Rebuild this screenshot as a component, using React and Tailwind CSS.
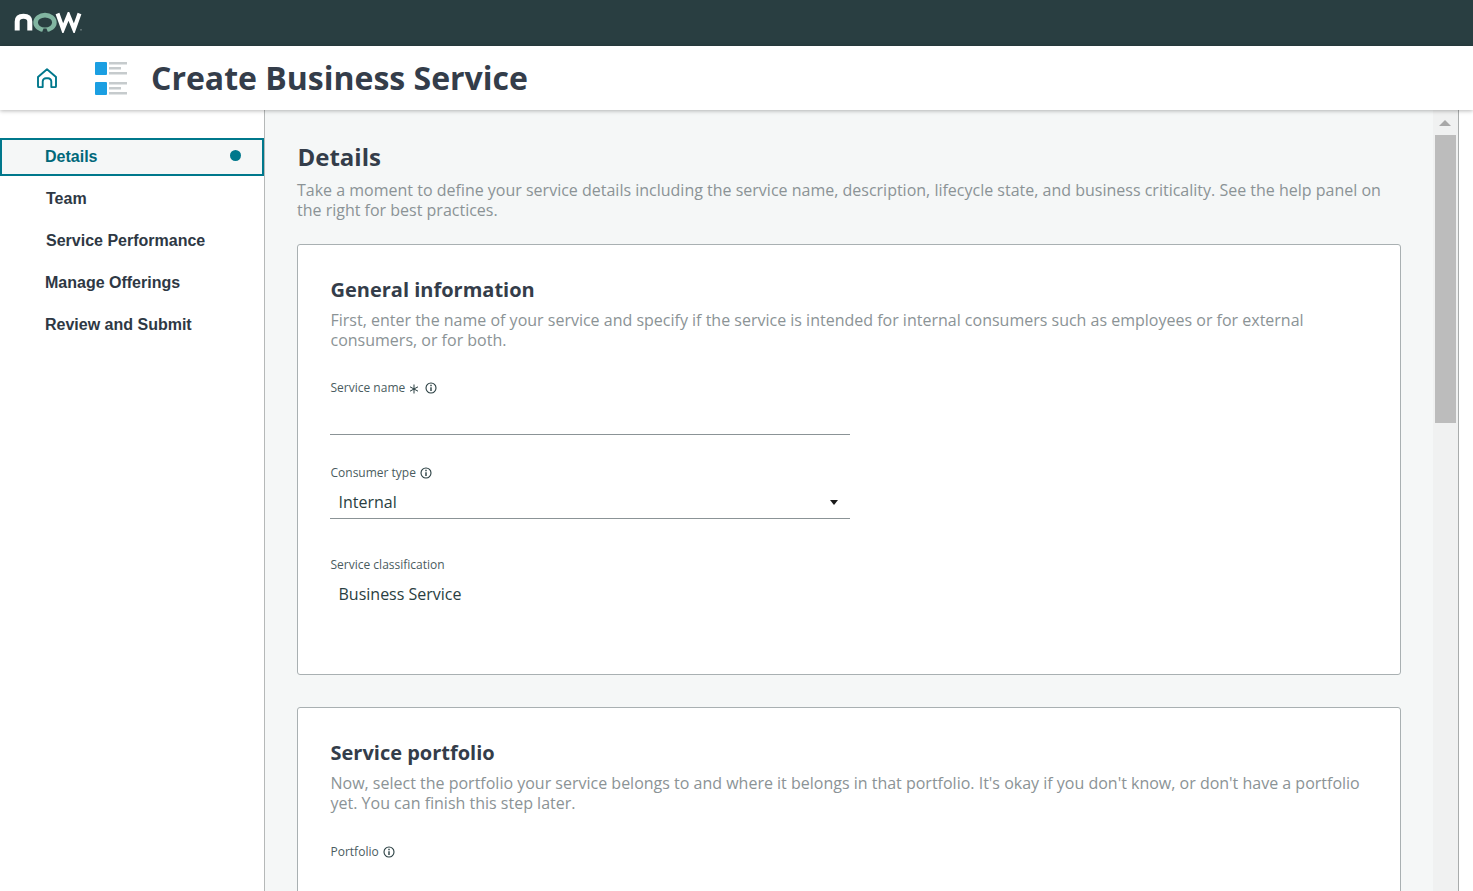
import React from "react";

const NAV = [
  { label: "Team", ml: "ml-[46px]" },
  { label: "Service Performance", ml: "ml-[46px]" },
  { label: "Manage Offerings", ml: "ml-[45px]" },
  { label: "Review and Submit", ml: "ml-[45px]" },
];

function NowLogo() {
  return (
    <svg width="68" height="21" viewBox="0 0 68 21" className="block">
      <path d="M3.2 18.5V9.5C3.2 6 5.4 4.2 9.5 4.2S15.8 6 15.8 9.5V18.5" fill="none" stroke="#fff" strokeWidth="5" />
      <ellipse cx="31" cy="10.5" rx="9.4" ry="7.4" fill="none" stroke="#81b5a1" strokeWidth="4.6" />
      <path d="M28 20.5 L29.5 16.5 H32.5 L34 20.5z" fill="#293e41" />
      <path d="M43.5 1.5 L49 17 L54.5 3.5 L60 17 L65.5 1.5" fill="none" stroke="#fff" strokeWidth="4" />
      <circle cx="67" cy="17.8" r="0.6" fill="#cfd6d6" />
    </svg>
  );
}

function HomeIcon() {
  return (
    <svg width="22" height="22" viewBox="0 0 22 22" fill="none" stroke="#00788c" strokeWidth="1.9" strokeLinejoin="round">
      <path d="M2 10L11 2.2 20 10V19.2a.9.9 0 0 1-.9.9H15.3V14.6a3.3 3.3 0 0 0-3.3-3.3H10a3.3 3.3 0 0 0-3.3 3.3V20.1H2.9a.9.9 0 0 1-.9-.9z" />
    </svg>
  );
}

function ListIcon() {
  return (
    <svg width="32" height="33" viewBox="0 0 32 33">
      <rect x="0" y="0" width="12" height="13" rx="1" fill="#1b9fe2" />
      <rect x="0" y="20" width="12" height="13" rx="1" fill="#1b9fe2" />
      <rect x="14" y="0" width="18" height="2.5" fill="#c6cbcd" />
      <rect x="14" y="5" width="12" height="2.5" fill="#c6cbcd" />
      <rect x="14" y="10" width="18" height="2.5" fill="#c6cbcd" />
      <rect x="14" y="20" width="18" height="2.5" fill="#c6cbcd" />
      <rect x="14" y="25" width="12" height="2.5" fill="#c6cbcd" />
      <rect x="14" y="30" width="18" height="2.5" fill="#c6cbcd" />
    </svg>
  );
}

function InfoIcon() {
  return (
    <svg width="12" height="12" viewBox="0 0 12 12" fill="none" stroke="#293e41" className="shrink-0">
      <circle cx="6" cy="6" r="5" strokeWidth="1.1" />
      <path d="M6 5.2V9" strokeWidth="1.4" />
      <path d="M6 2.8V4.2" strokeWidth="1.4" />
    </svg>
  );
}

function RequiredMark() {
  return (
    <svg width="10" height="10" viewBox="0 0 10 10" fill="none" stroke="#293e41" strokeWidth="1" className="shrink-0 mt-[2px]">
      <path d="M5 0.5V9.5M1 2.8L9 7.2M9 2.8L1 7.2" />
    </svg>
  );
}

function FieldLabel({ children }) {
  return <span className="text-[12px] leading-[16px] text-[#4a5c60]">{children}</span>;
}

export default function App() {
  return (
    <div className="h-[891px] overflow-hidden flex flex-col bg-white font-['Open_Sans',sans-serif]">
      <div className="h-[46px] shrink-0 bg-[#293e41] pl-[14px] pt-[12px]">
        <NowLogo />
      </div>

      <header className="h-[64px] shrink-0 flex items-center bg-white shadow-[0_1px_4px_rgba(0,0,0,0.28)] relative z-10">
        <div className="ml-[36px]">
          <HomeIcon />
        </div>
        <div className="ml-[37px]">
          <ListIcon />
        </div>
        <h1 className="ml-[24px] text-[32px] leading-[40px] font-bold text-[#343d4a]">Create Business Service</h1>
      </header>

      <div className="flex-1 flex min-h-0">
        <nav className="w-[265px] shrink-0 border-r border-[#b5b8b8] bg-white pt-[28px] font-['Liberation_Sans',sans-serif]">
          <div className="h-[38px] w-[264px] flex items-center justify-between border-2 border-[#00788c] bg-[#f5f7f7] pl-[43px] pr-[21px]">
            <span className="text-[16px] font-bold text-[#00687a]">Details</span>
            <span className="w-[11px] h-[11px] rounded-full bg-[#00788c] mb-[3px]"></span>
          </div>
          {NAV.map((n) => (
            <div key={n.label} className={`h-[42px] pt-[4px] flex items-center text-[16px] font-bold text-[#2e3844] ${n.ml}`}>
              {n.label}
            </div>
          ))}
        </nav>

        <main className="flex-1 bg-[#f5f7f7] pl-[32px] pr-[32px] pt-[31px] overflow-hidden">
          <h2 className="pl-[0.5px] text-[24px] leading-[32px] font-bold text-[#343d4a]">Details</h2>
          <p className="mt-[7px] text-[16px] leading-[20px] text-[#8b9396]">
            Take a moment to define your service details including the service name, description, lifecycle state, and business criticality. See the help panel on the right for best practices.
          </p>

          <section className="mt-[24px] h-[431px] bg-white border border-[#a9b0b2] rounded-[3px] pl-[32.5px] pr-[32px] pt-[30px]">
            <h3 className="text-[20px] leading-[30px] font-bold text-[#343d4a]">General information</h3>
            <p className="mt-[5px] text-[16px] leading-[20px] text-[#8b9396]">
              First, enter the name of your service and specify if the service is intended for internal consumers such as employees or for external consumers, or for both.
            </p>

            <div className="mt-[30px] w-[519px]">
              <div className="flex items-center h-[16px]">
                <FieldLabel>Service name</FieldLabel>
                <span className="ml-[4px] mr-[6px] flex">
                  <RequiredMark />
                </span>
                <InfoIcon />
              </div>
              <div className="h-[39px] -ml-[0.5px] border-b border-[#8b9396]"></div>
            </div>

            <div className="mt-[30px] w-[519px]">
              <div className="flex items-center h-[16px] gap-[4px]">
                <FieldLabel>Consumer type</FieldLabel>
                <InfoIcon />
              </div>
              <div className="mt-[5px] -ml-[0.5px] h-[33px] border-b border-[#8b9396] flex items-center justify-between pl-[8.5px] pr-[12px]">
                <span className="text-[16px] text-[#293e41]">Internal</span>
                <span className="w-0 h-0 border-l-[4px] border-r-[4px] border-t-[5px] border-l-transparent border-r-transparent border-t-[#1a1a1a]"></span>
              </div>
            </div>

            <div className="mt-[32px]">
              <FieldLabel>Service classification</FieldLabel>
              <div className="mt-[8px] pl-[8px] text-[16px] leading-[22px] text-[#293e41]">Business Service</div>
            </div>
          </section>

          <section className="mt-[32px] h-[300px] bg-white border border-[#a9b0b2] rounded-[3px] pl-[32.5px] pr-[32px] pt-[30px]">
            <h3 className="text-[20px] leading-[30px] font-bold text-[#343d4a]">Service portfolio</h3>
            <p className="mt-[5px] text-[16px] leading-[20px] text-[#8b9396]">
              Now, select the portfolio your service belongs to and where it belongs in that portfolio. It's okay if you don't know, or don't have a portfolio yet. You can finish this step later.
            </p>
            <div className="mt-[31px] flex items-center h-[16px] gap-[4px]">
              <FieldLabel>Portfolio</FieldLabel>
              <InfoIcon />
            </div>
          </section>
        </main>

        <div className="w-[26px] shrink-0 bg-[#f0f1f1] border-r border-[#a9acac] flex flex-col items-center pr-[1px]">
          <div className="h-[25px] flex items-center justify-center">
            <span className="w-0 h-0 border-l-[6px] border-r-[6px] border-b-[6px] border-l-transparent border-r-transparent border-b-[#a8a8a8]"></span>
          </div>
          <div className="w-[21px] h-[288px] bg-[#bcbcbc]"></div>
        </div>
        <div className="w-[14px] shrink-0 bg-white"></div>
      </div>
    </div>
  );
}
